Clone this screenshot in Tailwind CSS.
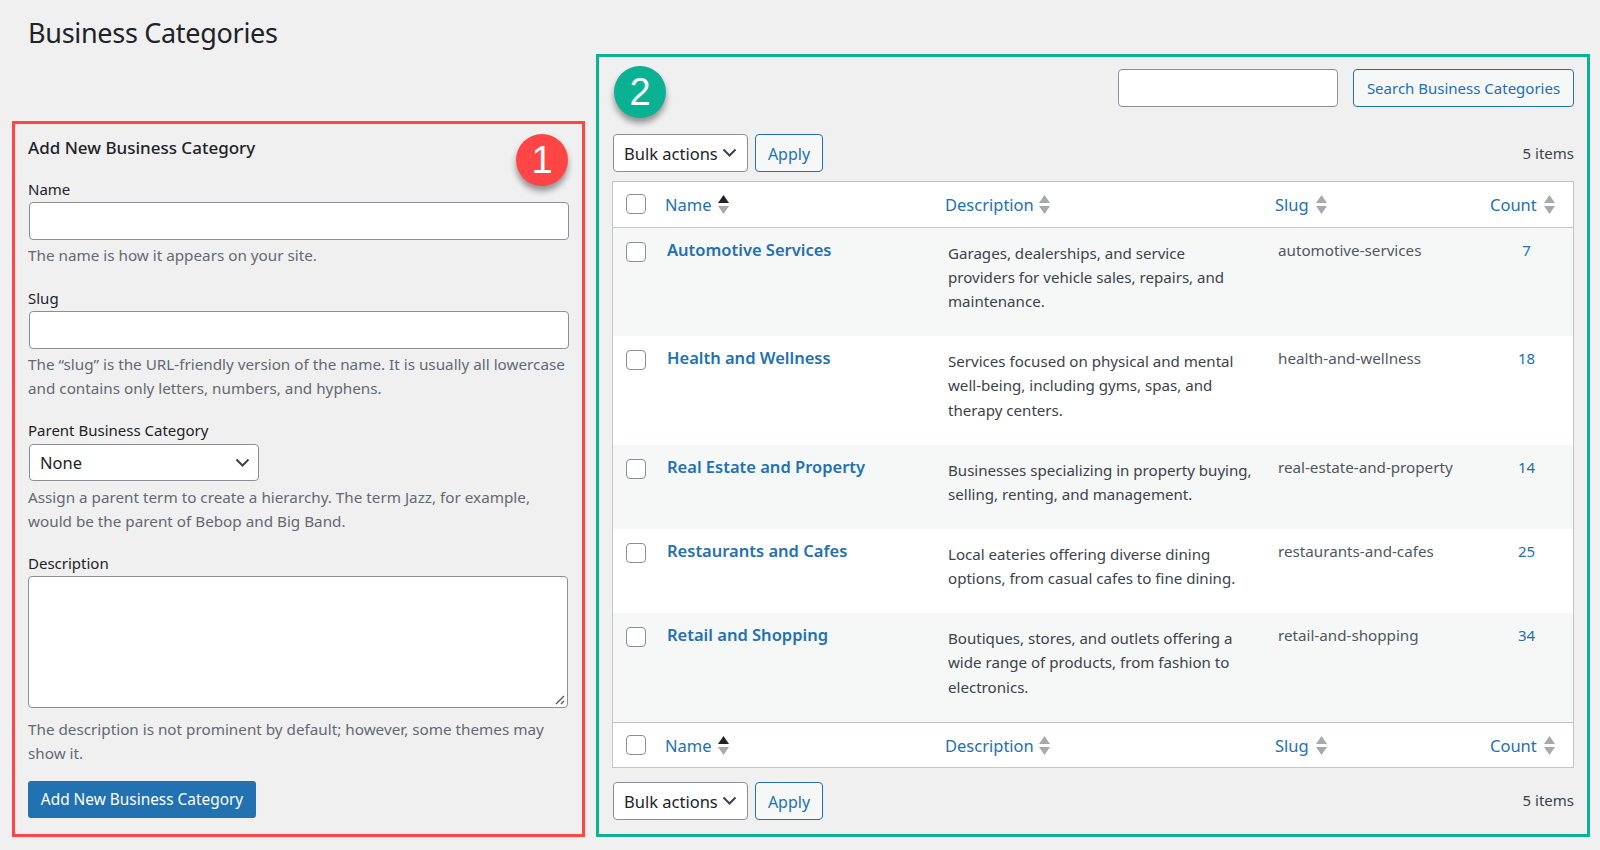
<!DOCTYPE html>
<html lang="en">
<head>
  <meta charset="UTF-8" />
  <title>Business Categories</title>
  <script src="https://cdn.jsdelivr.net/npm/@tailwindcss/browser@4"></script>
</head>
<body class="h-[850px] overflow-hidden bg-[#f0f0f1] text-[#1d2327] font-['Noto_Sans',sans-serif] text-[15px]">
<div class="flex items-start pl-3">

  <!-- Left column -->
  <div class="w-[573px]">
    <h1 class="h-[121px] pl-4 pt-[13px] text-[27px] leading-10 tracking-[-0.3px]">Business Categories</h1>

    <form class="relative h-[716px] border-[3px] border-[#ff4545] pl-[13px]">
      <h2 class="pt-3 text-[17px] leading-6 font-medium">Add New Business Category</h2>
      <div class="absolute left-[501px] top-[10px] flex h-[52px] w-[52px] items-center justify-center rounded-full bg-[#ff4545] font-['Liberation_Sans',sans-serif] text-[38px] text-white shadow-[0_5px_6px_rgba(0,0,0,0.4)]">1</div>

      <label class="mt-[18px] block h-6 leading-[22px]">Name</label>
      <input class="ml-px block h-[38px] w-[540px] rounded border border-[#8c8f94] bg-white" />
      <p class="mt-[3px] text-[15.25px] leading-6 text-[#646970]">The name is how it appears on your site.</p>

      <label class="mt-5 block h-6 leading-[22px]">Slug</label>
      <input class="ml-px block h-[38px] w-[540px] rounded border border-[#8c8f94] bg-white" />
      <p class="mt-[3px] text-[15.25px] leading-6 text-[#646970]">The “slug” is the URL-friendly version of the name. It is usually all lowercase<br />and contains only letters, numbers, and hyphens.</p>

      <label class="mt-5 block h-6 leading-5">Parent Business Category</label>
      <div class="relative ml-px h-[37px] w-[230px]">
        <select class="h-full w-full appearance-none rounded border border-[#8c8f94] bg-white pl-[10px] pt-px text-[16.5px]"><option>None</option></select>
        <svg class="absolute right-[9px] top-[14px] h-[10px] w-[15px]" viewBox="0 0 15 10" fill="none" stroke="#3c434a" stroke-width="2"><path d="M1.5 1.5 7.5 7.5 13.5 1.5" /></svg>
      </div>
      <p class="mt-1 text-[15.25px] leading-6 text-[#646970]">Assign a parent term to create a hierarchy. The term Jazz, for example,<br />would be the parent of Bebop and Big Band.</p>

      <label class="mt-[19px] block h-6 leading-[22px]">Description</label>
      <div class="relative h-[132px] w-[540px] rounded border border-[#8c8f94] bg-white">
        <textarea class="h-full w-full resize-none rounded"></textarea>
        <svg class="absolute bottom-[2px] right-[2px] h-[10px] w-[10px]" viewBox="0 0 10 10" stroke="#555" stroke-width="1.3"><path d="M1 9 9 1M6 9 9 6" /></svg>
      </div>
      <p class="mt-[9px] text-[15.25px] leading-6 text-[#646970]">The description is not prominent by default; however, some themes may<br />show it.</p>

      <button type="button" class="mt-4 h-[37px] w-[228px] rounded-[3px] bg-[#2271b1] text-center text-[15.4px] text-white">Add New Business Category</button>
    </form>
  </div>

  <!-- Right column -->
  <section class="relative ml-[11px] mt-[54px] h-[783px] w-[994px] border-[3px] border-[#0ab193] px-[13px] pt-3">
    <div class="absolute left-[15px] top-[9px] flex h-[52px] w-[52px] items-center justify-center rounded-full bg-[#0ab193] pt-px font-['Liberation_Sans',sans-serif] text-[38px] text-white shadow-[0_5px_6px_rgba(0,0,0,0.4)]">2</div>

    <div class="flex justify-end gap-[15px]">
      <input class="h-[38px] w-[220px] rounded border border-[#8c8f94] bg-white" />
      <button type="button" class="h-[38px] w-[221px] rounded border border-[#2271b1] bg-[#f6f7f7] text-[#2271b1]">Search Business Categories</button>
    </div>

    <div class="mt-[27px] flex items-center">
      <div class="relative ml-px h-[38px] w-[135px]">
        <select class="h-full w-full appearance-none rounded border border-[#8c8f94] bg-white pl-[10px] pt-0.5 text-[16.5px]"><option>Bulk actions</option></select>
        <svg class="absolute right-[11px] top-[14px] h-[10px] w-[15px]" viewBox="0 0 15 10" fill="none" stroke="#3c434a" stroke-width="2"><path d="M1.5 1.5 7.5 7.5 13.5 1.5" /></svg>
      </div>
      <button type="button" class="ml-[7px] h-[38px] w-[68px] rounded border border-[#2271b1] bg-[#f6f7f7] pt-0.5 text-base text-[#2271b1]">Apply</button>
      <span class="ml-auto text-[#3c434a]">5 items</span>
    </div>

    <div class="mt-[9px] h-[587px] border border-[#c3c4c7] bg-white">
      <table class="w-[960px] table-fixed border-collapse">
        <colgroup>
          <col class="w-[42px]" /><col class="w-[280px]" /><col class="w-[330px]" /><col class="w-[215px]" /><col class="w-[93px]" />
        </colgroup>
        <thead>
          <tr class="h-[45px] border-b border-[#c3c4c7]">
            <th class="pl-[13px]"><span class="block h-5 w-5 rounded border border-[#8c8f94] bg-white"></span></th>
            <th class="pl-[10px] text-left text-[16.5px] font-normal text-[#2271b1]"><span class="inline-flex items-center gap-[6px]"><span class="pt-0.5">Name</span> <svg class="h-[19px] w-[11px]" viewBox="0 0 11 19"><path d="M5.5 0 11 8H0Z" fill="#1d2327" /><path d="M0 11H11L5.5 19Z" fill="#a7aaad" /></svg></span></th>
            <th class="pl-[10px] text-left text-[16.5px] font-normal text-[#2271b1]"><span class="inline-flex items-center gap-[5px]"><span class="pt-0.5">Description</span> <svg class="h-[19px] w-[11px]" viewBox="0 0 11 19"><path d="M5.5 0 11 8H0Z" fill="#a7aaad" /><path d="M0 11H11L5.5 19Z" fill="#a7aaad" /></svg></span></th>
            <th class="pl-[10px] text-left text-[16.5px] font-normal text-[#2271b1]"><span class="inline-flex items-center gap-[7px]"><span class="pt-0.5">Slug</span> <svg class="h-[19px] w-[11px]" viewBox="0 0 11 19"><path d="M5.5 0 11 8H0Z" fill="#a7aaad" /><path d="M0 11H11L5.5 19Z" fill="#a7aaad" /></svg></span></th>
            <th class="pl-[10px] text-left text-[16.5px] font-normal text-[#2271b1]"><span class="inline-flex items-center gap-[7px]"><span class="pt-0.5">Count</span> <svg class="h-[19px] w-[11px]" viewBox="0 0 11 19"><path d="M5.5 0 11 8H0Z" fill="#a7aaad" /><path d="M0 11H11L5.5 19Z" fill="#a7aaad" /></svg></span></th>
          </tr>
        </thead>
        <tbody>
          <tr class="h-[109px] bg-[#f6f7f7] align-top">
            <td class="pl-[13px] pt-[14px]"><span class="block h-5 w-5 rounded border border-[#8c8f94] bg-white"></span></td>
            <td class="pl-3 pt-[10px] text-[16.5px] font-semibold leading-6 text-[#2271b1]">Automotive Services</td>
            <td class="pl-[13px] pt-[13px] text-[15.1px] leading-[24.3px] text-[#3c434a]">Garages, dealerships, and service<br />providers for vehicle sales, repairs, and<br />maintenance.</td>
            <td class="pl-[13px] pt-[10px] text-[15.2px] leading-6 text-[#50575e]">automotive-services</td>
            <td class="pt-[10px] text-center leading-6 text-[#2271b1]">7</td>
          </tr>
          <tr class="h-[109px] bg-white align-top">
            <td class="pl-[13px] pt-[14px]"><span class="block h-5 w-5 rounded border border-[#8c8f94] bg-white"></span></td>
            <td class="pl-3 pt-[10px] text-[16.5px] font-semibold leading-6 text-[#2271b1]">Health and Wellness</td>
            <td class="pl-[13px] pt-[13px] text-[15.1px] leading-[24.3px] text-[#3c434a]">Services focused on physical and mental<br />well-being, including gyms, spas, and<br />therapy centers.</td>
            <td class="pl-[13px] pt-[10px] text-[15.2px] leading-6 text-[#50575e]">health-and-wellness</td>
            <td class="pt-[10px] text-center leading-6 text-[#2271b1]">18</td>
          </tr>
          <tr class="h-[84px] bg-[#f6f7f7] align-top">
            <td class="pl-[13px] pt-[14px]"><span class="block h-5 w-5 rounded border border-[#8c8f94] bg-white"></span></td>
            <td class="pl-3 pt-[10px] text-[16.5px] font-semibold leading-6 text-[#2271b1]">Real Estate and Property</td>
            <td class="pl-[13px] pt-[13px] text-[15.1px] leading-[24.3px] text-[#3c434a]">Businesses specializing in property buying,<br />selling, renting, and management.</td>
            <td class="pl-[13px] pt-[10px] text-[15.2px] leading-6 text-[#50575e]">real-estate-and-property</td>
            <td class="pt-[10px] text-center leading-6 text-[#2271b1]">14</td>
          </tr>
          <tr class="h-[84px] bg-white align-top">
            <td class="pl-[13px] pt-[14px]"><span class="block h-5 w-5 rounded border border-[#8c8f94] bg-white"></span></td>
            <td class="pl-3 pt-[10px] text-[16.5px] font-semibold leading-6 text-[#2271b1]">Restaurants and Cafes</td>
            <td class="pl-[13px] pt-[13px] text-[15.1px] leading-[24.3px] text-[#3c434a]">Local eateries offering diverse dining<br />options, from casual cafes to fine dining.</td>
            <td class="pl-[13px] pt-[10px] text-[15.2px] leading-6 text-[#50575e]">restaurants-and-cafes</td>
            <td class="pt-[10px] text-center leading-6 text-[#2271b1]">25</td>
          </tr>
          <tr class="h-[109px] bg-[#f6f7f7] align-top">
            <td class="pl-[13px] pt-[14px]"><span class="block h-5 w-5 rounded border border-[#8c8f94] bg-white"></span></td>
            <td class="pl-3 pt-[10px] text-[16.5px] font-semibold leading-6 text-[#2271b1]">Retail and Shopping</td>
            <td class="pl-[13px] pt-[13px] text-[15.1px] leading-[24.3px] text-[#3c434a]">Boutiques, stores, and outlets offering a<br />wide range of products, from fashion to<br />electronics.</td>
            <td class="pl-[13px] pt-[10px] text-[15.2px] leading-6 text-[#50575e]">retail-and-shopping</td>
            <td class="pt-[10px] text-center leading-6 text-[#2271b1]">34</td>
          </tr>
        </tbody>
        <tfoot>
          <tr class="h-[44px] border-t border-[#c3c4c7]">
            <td class="pl-[13px] pt-0.5"><span class="block h-5 w-5 rounded border border-[#8c8f94] bg-white"></span></td>
            <td class="pl-[10px] pt-0.5 text-[16.5px] text-[#2271b1]"><span class="inline-flex items-center gap-[6px]"><span class="pt-0.5">Name</span> <svg class="h-[19px] w-[11px]" viewBox="0 0 11 19"><path d="M5.5 0 11 8H0Z" fill="#1d2327" /><path d="M0 11H11L5.5 19Z" fill="#a7aaad" /></svg></span></td>
            <td class="pl-[10px] pt-0.5 text-[16.5px] text-[#2271b1]"><span class="inline-flex items-center gap-[5px]"><span class="pt-0.5">Description</span> <svg class="h-[19px] w-[11px]" viewBox="0 0 11 19"><path d="M5.5 0 11 8H0Z" fill="#a7aaad" /><path d="M0 11H11L5.5 19Z" fill="#a7aaad" /></svg></span></td>
            <td class="pl-[10px] pt-0.5 text-[16.5px] text-[#2271b1]"><span class="inline-flex items-center gap-[7px]"><span class="pt-0.5">Slug</span> <svg class="h-[19px] w-[11px]" viewBox="0 0 11 19"><path d="M5.5 0 11 8H0Z" fill="#a7aaad" /><path d="M0 11H11L5.5 19Z" fill="#a7aaad" /></svg></span></td>
            <td class="pl-[10px] pt-0.5 text-[16.5px] text-[#2271b1]"><span class="inline-flex items-center gap-[7px]"><span class="pt-0.5">Count</span> <svg class="h-[19px] w-[11px]" viewBox="0 0 11 19"><path d="M5.5 0 11 8H0Z" fill="#a7aaad" /><path d="M0 11H11L5.5 19Z" fill="#a7aaad" /></svg></span></td>
          </tr>
        </tfoot>
      </table>
    </div>

    <div class="mt-[14px] flex items-center">
      <div class="relative ml-px h-[38px] w-[135px]">
        <select class="h-full w-full appearance-none rounded border border-[#8c8f94] bg-white pl-[10px] pt-0.5 text-[16.5px]"><option>Bulk actions</option></select>
        <svg class="absolute right-[11px] top-[14px] h-[10px] w-[15px]" viewBox="0 0 15 10" fill="none" stroke="#3c434a" stroke-width="2"><path d="M1.5 1.5 7.5 7.5 13.5 1.5" /></svg>
      </div>
      <button type="button" class="ml-[7px] h-[38px] w-[68px] rounded border border-[#2271b1] bg-[#f6f7f7] pt-0.5 text-base text-[#2271b1]">Apply</button>
      <span class="ml-auto pb-0.5 text-[#3c434a]">5 items</span>
    </div>
  </section>
</div>
</body>
</html>
